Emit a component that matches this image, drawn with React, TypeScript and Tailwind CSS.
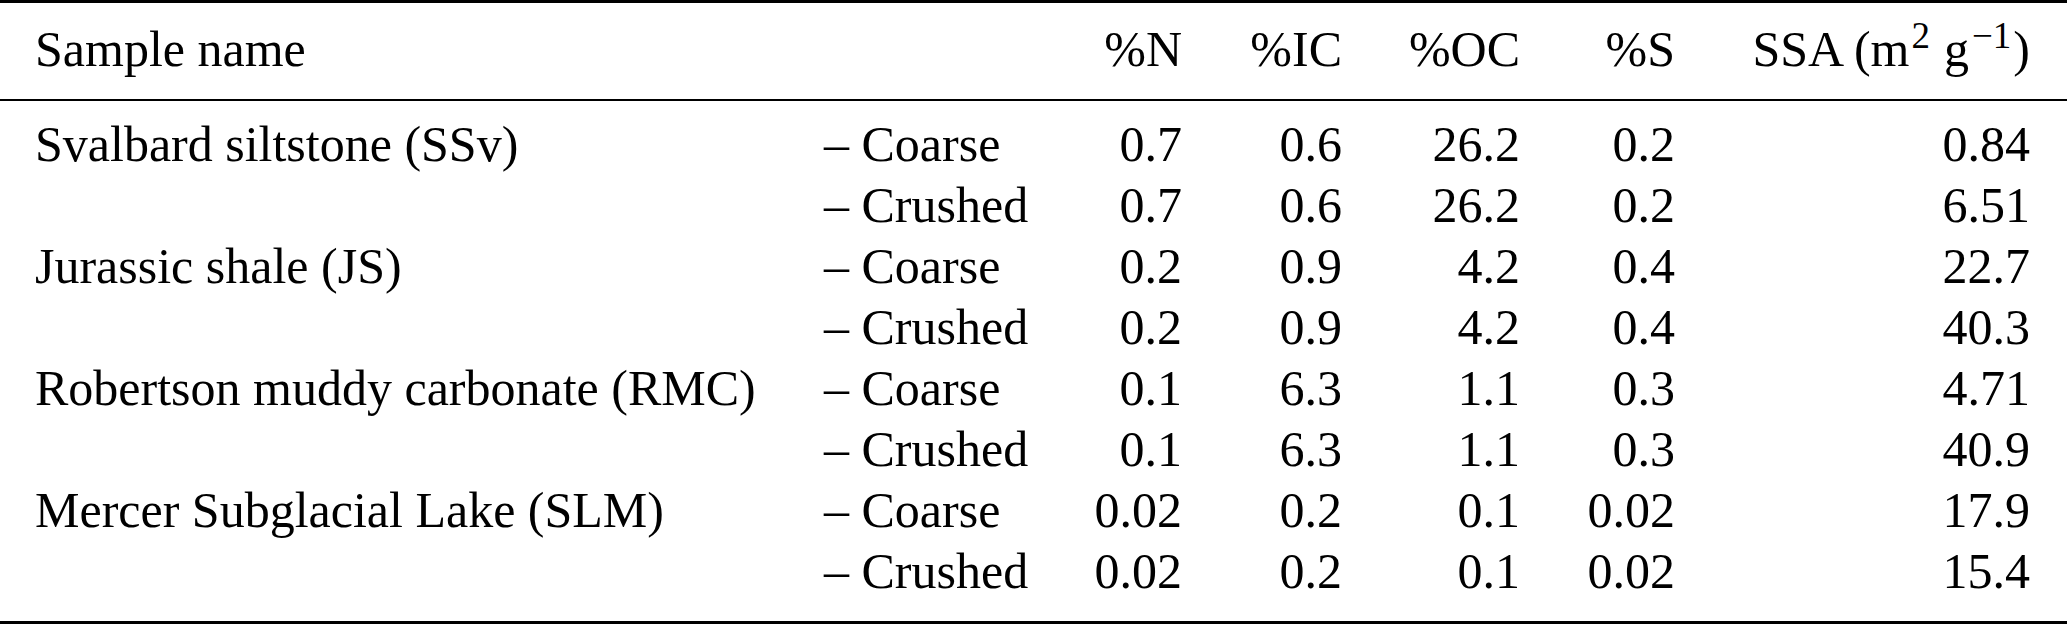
const ROWS: { name: string; grade: string; n: string; ic: string; oc: string; s: string; ssa: string }[] = [
  { name: 'Svalbard siltstone (SSv)', grade: 'Coarse', n: '0.7', ic: '0.6', oc: '26.2', s: '0.2', ssa: '0.84' },
  { name: '', grade: 'Crushed', n: '0.7', ic: '0.6', oc: '26.2', s: '0.2', ssa: '6.51' },
  { name: 'Jurassic shale (JS)', grade: 'Coarse', n: '0.2', ic: '0.9', oc: '4.2', s: '0.4', ssa: '22.7' },
  { name: '', grade: 'Crushed', n: '0.2', ic: '0.9', oc: '4.2', s: '0.4', ssa: '40.3' },
  { name: 'Robertson muddy carbonate (RMC)', grade: 'Coarse', n: '0.1', ic: '6.3', oc: '1.1', s: '0.3', ssa: '4.71' },
  { name: '', grade: 'Crushed', n: '0.1', ic: '6.3', oc: '1.1', s: '0.3', ssa: '40.9' },
  { name: 'Mercer Subglacial Lake (SLM)', grade: 'Coarse', n: '0.02', ic: '0.2', oc: '0.1', s: '0.02', ssa: '17.9' },
  { name: '', grade: 'Crushed', n: '0.02', ic: '0.2', oc: '0.1', s: '0.02', ssa: '15.4' },
]

const GRID = 'grid grid-cols-[824px_216px_142px_160px_178px_155px_355px]'

export default function App() {
  return (
    <div className="w-[2067px] h-[627px] bg-white text-black font-['Liberation_Serif','Times_New_Roman',serif] text-[50px] leading-[61px]">
      {/* top rule */}
      <div className="h-[3px] bg-black" />

      {/* header */}
      <div className={`${GRID} pt-[16px] pb-[19px]`}>
        <div className="pl-[35px]">Sample name</div>
        <div />
        <div className="text-right">%N</div>
        <div className="text-right">%IC</div>
        <div className="text-right">%OC</div>
        <div className="text-right">%S</div>
        <div className="text-right whitespace-nowrap">
          SSA (m<sup className="text-[37px] pl-[2px]">2</sup>
          <span className="ml-[14px]">g</span>
          <sup className="text-[37px] pl-[3px] pr-[2px]">−1</sup>)
        </div>
      </div>

      {/* mid rule */}
      <div className="h-[2px] bg-black" />

      {/* body */}
      <div className="pt-[13px] pb-[19px]">
        {ROWS.map((r, i) => (
          <div key={i} className={`${GRID} h-[61px]`}>
            <div className="pl-[35px] whitespace-nowrap">{r.name}</div>
            <div className="whitespace-nowrap">– {r.grade}</div>
            <div className="text-right">{r.n}</div>
            <div className="text-right">{r.ic}</div>
            <div className="text-right">{r.oc}</div>
            <div className="text-right">{r.s}</div>
            <div className="text-right">{r.ssa}</div>
          </div>
        ))}
      </div>

      {/* bottom rule */}
      <div className="h-[3px] bg-black" />
    </div>
  )
}
